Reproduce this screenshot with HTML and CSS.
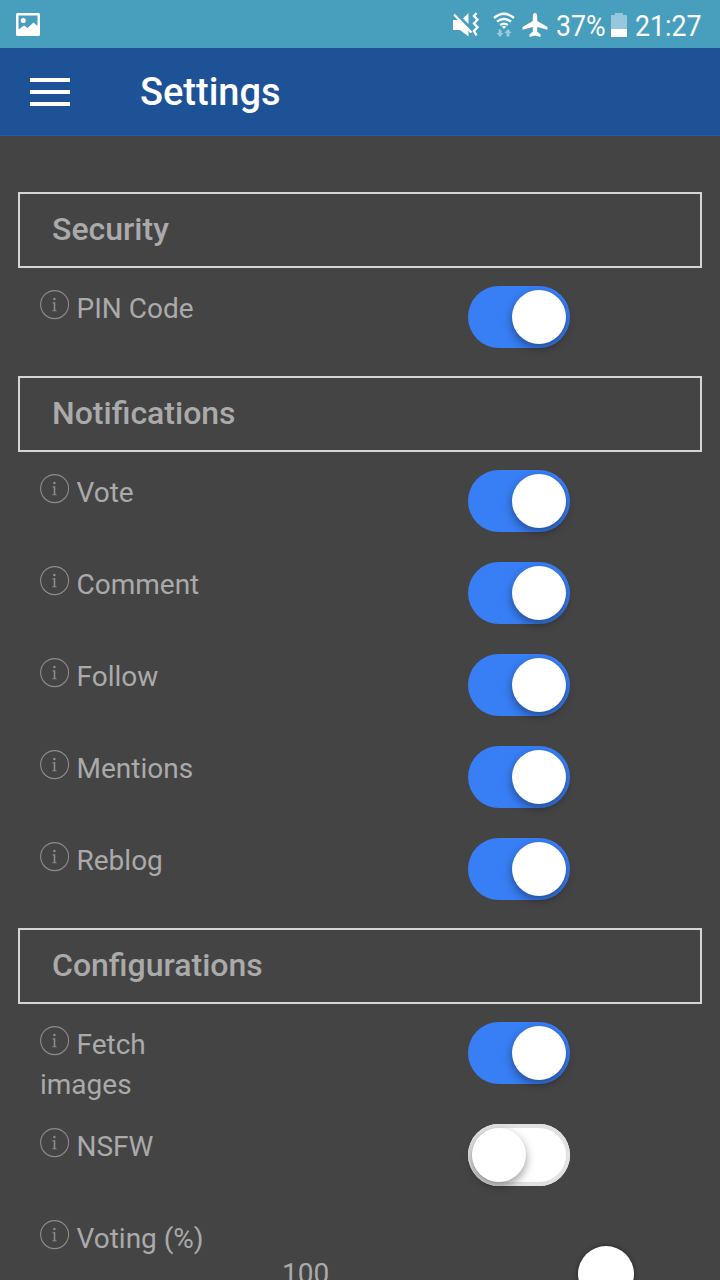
FILE: index.html
```html
<!DOCTYPE html>
<html lang="en">
<head>
	<meta charset="UTF-8">
	<title>Settings</title>
	<link rel="stylesheet" href="styles.css">
</head>
<body>
	<svg class="defs">
		<symbol id="info" viewBox="0 0 30 30">
			<circle cx="14.6" cy="14.6" r="14" fill="none" stroke="currentColor" stroke-width="1.1"/>
			<circle cx="14.4" cy="9" r="1.3" fill="currentColor"/>
			<path fill="currentColor" d="M12.300 12.600l3-.500v8.200l1.400.300v.700h-4.400v-.700l1.400-.300v-6.800l-1.400-.200z"/>
		</symbol>
	</svg>
	<div class="status">
		<svg class="pic" width="24" height="24" viewBox="0 0 24 24">
			<path fill="#fff" fill-rule="evenodd" d="M1.500 0h21A1.500 1.500 0 0 1 24 1.500v20a1.500 1.500 0 0 1-1.500 1.500h-21A1.500 1.500 0 0 1 0 21.500v-20A1.500 1.500 0 0 1 1.500 0zM2.500 2.500v14l5.500-4 3.500 2.500 6-5.500 4 3.500V2.500z"/>
			<circle cx="7.300" cy="7.500" r="2.500" fill="#fff"/>
		</svg>
		<svg class="mute" width="26" height="26" viewBox="0 0 26 26">
			<path fill="#fff" d="M0 8h6L15.500 17v7.500L7 18H0zM10 6.500L15.500 1v11z"/>
			<path d="M1 2.500l17.500 18" stroke="#fff" stroke-width="2.200"/>
			<path d="M23.500 1l-2.500 3 3.500 3.700-3.500 3.800 3.500 3.700-3.500 3.800 2.500 4.500" fill="none" stroke="#fff" stroke-width="2.400"/>
		</svg>
		<svg class="wifi" width="22" height="25" viewBox="0 0 22 25">
			<g fill="none" stroke="#fff" stroke-width="2.300">
				<path d="M1 6q10-8.500 20 0"/>
				<path d="M4 9.700q7-5.500 14 0"/>
				<path d="M7.200 13q3.800-2.700 7.600 0"/>
			</g>
			<path fill="#fff" d="M8.700 14.500q2.300-1.500 4.600 0L11 17z"/>
			<path fill="#9acbdd" d="M5.500 17.500h3V21h2L7 25l-3.500-4h2zM13.500 24.500h3V21h2L15 17l-3.500 4h2z"/>
		</svg>
		<svg class="plane" width="26" height="24" viewBox="0 0 26 24">
			<path fill="#fff" d="M13 0c1.300 0 2.200 1.300 2.200 3v5L25.500 14v2.800L15.200 14v4.700l3.300 2.600V24L13 22.500 7.500 24v-2.700l3.300-2.600V14L.500 16.800V14l10.300-6V3c0-1.700.900-3 2.200-3z"/>
		</svg>
		<span class="pct">37%</span>
		<svg class="battery" width="16" height="24" viewBox="0 0 16 24">
			<path fill="#95c8db" d="M4 0h8v2h4v22H0V2h4z"/>
			<path fill="#fff" d="M0 16h16v8H0z"/>
		</svg>
		<span class="clock">21:27</span>
	</div>
	<div class="navbar">
		<div class="menu"><i></i><i></i><i></i></div>
		<h1>Settings</h1>
	</div>

	<div class="content">
		<h2>Security</h2>
		<div class="row">
			<div class="label"><svg class="info"><use href="#info"/></svg>PIN Code</div>
			<div class="toggle on"><div class="handle"></div></div>
		</div>

		<h2>Notifications</h2>
		<div class="row">
			<div class="label"><svg class="info"><use href="#info"/></svg>Vote</div>
			<div class="toggle on"><div class="handle"></div></div>
		</div>
		<div class="row">
			<div class="label"><svg class="info"><use href="#info"/></svg>Comment</div>
			<div class="toggle on"><div class="handle"></div></div>
		</div>
		<div class="row">
			<div class="label"><svg class="info"><use href="#info"/></svg>Follow</div>
			<div class="toggle on"><div class="handle"></div></div>
		</div>
		<div class="row">
			<div class="label"><svg class="info"><use href="#info"/></svg>Mentions</div>
			<div class="toggle on"><div class="handle"></div></div>
		</div>
		<div class="row">
			<div class="label"><svg class="info"><use href="#info"/></svg>Reblog</div>
			<div class="toggle on"><div class="handle"></div></div>
		</div>

		<h2>Configurations</h2>
		<div class="row tall">
			<div class="label"><svg class="info"><use href="#info"/></svg>Fetch images</div>
			<div class="toggle on"><div class="handle"></div></div>
		</div>
		<div class="row">
			<div class="label"><svg class="info"><use href="#info"/></svg>NSFW</div>
			<div class="toggle"><div class="handle"></div></div>
		</div>
		<div class="row">
			<div class="label"><svg class="info"><use href="#info"/></svg>Voting (%)</div>
			<div class="range">
				<span class="value">100</span>
				<div class="knob"></div>
			</div>
		</div>
	</div>
</body>
</html>
```
FILE: styles.css
```css
body,h1,h2{padding: 0;margin: 0;}
body{
	width: 720px;
	height: 1280px;
	overflow: hidden;
	background: #444;
	color: #aaa;
	font-family: Roboto, "Liberation Sans", sans-serif;
}
svg{
	display: block;
	flex: none;
}
.defs{
	display: none;
}
.status{
	display: flex;
	align-items: center;
	height: 48px;
	background: #489ebd;
	color: #fff;
	font-size: 30px;
	line-height: 48px;
}
.pic{
	margin: 1px 412px 0 16px;
}
.mute{
	margin: 2px 0 0 1px;
}
.wifi{
	margin-left: 14px;
}
.plane{
	margin: 2px 0 0 7px;
}
.pct{
	width: 50px;
	margin-left: 8px;
	padding-top: 3px;
	white-space: nowrap;
}
.battery{
	margin: 1px 0 0 5px;
}
.clock{
	margin-left: 8px;
	padding-top: 3px;
}
/* narrow digits */
.pct,.clock{
	transform: scaleX(0.89);
	transform-origin: 0 50%;
}
.navbar{
	display: flex;
	align-items: center;
	height: 88px;
	box-sizing: border-box;
	border-bottom: 1px solid #2459a8;
	background: #1e5296;
	color: #fff;
}
.menu{
	display: flex;
	flex-direction: column;
	gap: 8px;
	width: 40px;
	margin: 1px 70px 0 30px;
}
.menu i{
	height: 4px;
	background: #fff;
}
h1{
	font-size: 38px;
	font-weight: 500;
	line-height: 86px;
}
.content{
	padding: 40px 18px 0;
}
h2{
	height: 76px;
	margin-top: 16px;
	box-sizing: border-box;
	border: 2px solid #d5d5d5;
	padding-left: 32px;
	font-size: 32px;
	font-weight: 500;
	line-height: 70px;
}
.row{
	display: flex;
	height: 92px;
	padding-left: 22px;
}
.tall{
	height: 102px;
}
.label{
	width: 180px;
	padding-top: 21px;
	font-size: 28px;
	line-height: 40px;
}
.info{
	display: inline-block;
	width: 30px;
	height: 30px;
	margin-right: 6.5px;
	vertical-align: -2px;
	color: #8c8c8c;
}
.toggle{
	width: 102px;
	height: 62px;
	margin: 18px 0 0 248px;
	padding: 4px;
	box-sizing: border-box;
	border-radius: 31px;
	background: #fff;
	box-shadow: inset 0 0 0 4px #e2e2e2;
}
.handle{
	width: 54px;
	height: 54px;
	border-radius: 50%;
	background: #fff;
	box-shadow: 0 4px 10px rgba(0,0,0,0.4);
}
.on{
	background: #387ef5;
	box-shadow: none;
}
.on .handle{
	margin-left: 40px;
}
.range{
	display: flex;
	flex: 1;
	padding: 48px 0 0 62px;
}
.value{
	width: 46px;
	padding-top: 11px;
	font-size: 28px;
	line-height: 34px;
}
.knob{
	width: 56px;
	height: 56px;
	margin-left: 250px;
	border-radius: 50%;
	background: #fff;
	box-shadow: 0 0 4px rgba(0,0,0,0.5);
}
```
